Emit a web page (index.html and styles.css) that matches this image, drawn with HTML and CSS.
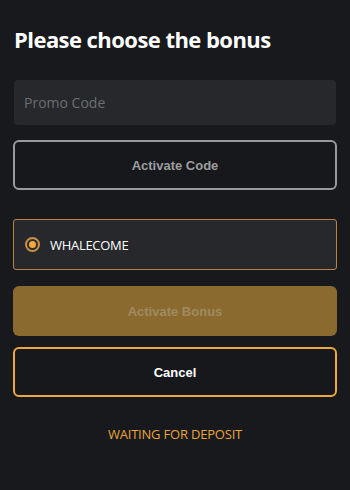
FILE: index.html
```html
<!DOCTYPE html>
<html>
<head>
<meta charset="utf-8">
<link rel="stylesheet" href="styles.css">
</head>
<body>
<div class="panel">
  <h1 class="title">Please choose the bonus</h1>
  <input class="promo" type="text" placeholder="Promo Code">
  <button class="btn btn-code">Activate Code</button>
  <div class="option">
    <span class="radio"><span class="dot"></span></span>
    <span class="option-label">WHALECOME</span>
  </div>
  <button class="btn btn-bonus">Activate Bonus</button>
  <button class="btn btn-cancel">Cancel</button>
  <div class="status">WAITING FOR DEPOSIT</div>
</div>
</body>
</html>
```
FILE: styles.css
```css
html, body {
  margin: 0;
  padding: 0;
  background: #18191c;
}
.panel {
  display: flex;
  flex-direction: column;
  padding: 25px 14px 0 14px;
  box-sizing: border-box;
  width: 350px;
  height: 490px;
  font-family: "Open Sans", sans-serif;
}
.title {
  margin: 0;
  font-size: 22px;
  line-height: 28px;
  font-weight: 700;
  color: #ffffff;
  letter-spacing: -0.55px;
}
.promo {
  margin-top: 27px;
  height: 45px;
  box-sizing: border-box;
  border: none;
  border-radius: 4px;
  background: #26282c;
  padding: 0 10px;
  font-family: "Open Sans", sans-serif;
  font-size: 14px;
  color: #ddd;
  outline: none;
}
.promo::placeholder {
  color: #6c6e72;
}
.btn {
  height: 50px;
  box-sizing: border-box;
  border-radius: 6px;
  font-family: "Liberation Sans", Arial, sans-serif;
  font-weight: 700;
  font-size: 13px;
  padding: 0;
  margin-left: -1px;
  margin-right: -1px;
}
.btn-code {
  margin-top: 15px;
  background: #17181b;
  border: 2px solid #9a9a9c;
  color: #9c9ea0;
}
.option {
  margin-top: 29px;
  margin-left: -1px;
  margin-right: -1px;
  height: 51px;
  box-sizing: border-box;
  border: 1px solid #b98440;
  border-radius: 3px;
  background: #26282c;
  display: flex;
  align-items: center;
  padding-left: 11px;
  gap: 10px;
}
.radio {
  width: 15px;
  height: 15px;
  box-sizing: border-box;
  border-radius: 50%;
  border: 2px solid #c9914a;
  background: #2d2c2a;
  display: flex;
  align-items: center;
  justify-content: center;
}
.dot {
  width: 7px;
  height: 7px;
  border-radius: 50%;
  background: #f2a93b;
}
.option-label {
  color: #ffffff;
  font-size: 13px;
  letter-spacing: -0.3px;
}
.btn-bonus {
  margin-top: 16px;
  background: #8b6a2f;
  border: none;
  color: #a08a60;
}
.btn-cancel {
  margin-top: 11px;
  background: #17181b;
  border: 2px solid #f0a83c;
  color: #ffffff;
}
.status {
  margin-top: 28px;
  text-align: center;
  color: #e9a43d;
  font-size: 13px;
  letter-spacing: -0.2px;
}
```
